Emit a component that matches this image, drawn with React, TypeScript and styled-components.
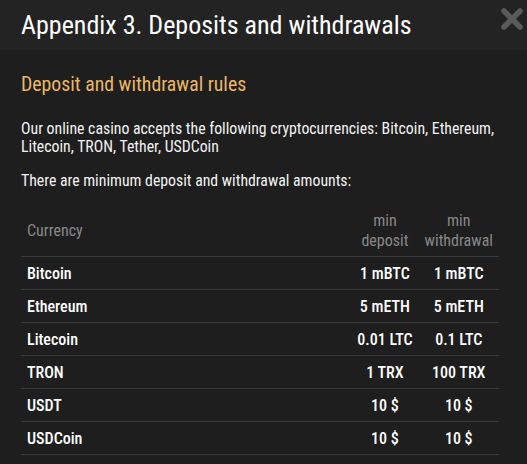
import React from "react";
import styled, { createGlobalStyle } from "styled-components";

const Global = createGlobalStyle`
  html, body { margin: 0; padding: 0; background: #1e1e1e; }
  body { font-family: Roboto, "Liberation Sans", sans-serif; font-stretch: condensed; }
`;

const Modal = styled.div`
  width: 527px;
  height: 464px;
  background: #1e1e1e;
  color: #fff;
  overflow: hidden;
`;

const Header = styled.header`
  height: 50px;
  background: #232323;
  display: flex;
  align-items: center;
  justify-content: space-between;
  padding: 0 0 0 21px;
`;

const Title = styled.h1`
  margin: 0;
  font-size: 26px;
  font-weight: 400;
  color: #fff;
  line-height: 30px;
`;

const Close = styled.button`
  background: none;
  border: 0;
  padding: 0;
  width: 30px;
  height: 30px;
  align-self: flex-start;
  margin-top: 5px;
  cursor: pointer;
`;

const Body = styled.div`
  padding: 22px 28px 0 21px;
`;

const Subtitle = styled.h2`
  margin: 0;
  font-size: 19.8px;
  font-weight: 400;
  color: #e9b766;
  line-height: 26px;
`;

const Para = styled.p<{ $top: number }>`
  margin: ${(p) => p.$top}px -6px 0 0;
  font-size: 15.8px;
  line-height: 18px;
  color: #f2f2f2;
`;

const Table = styled.table`
  margin-top: 19px;
  width: 478px;
  border-collapse: collapse;
`;

const Th = styled.th<{ $align?: string; $fit?: boolean }>`
  font-weight: 400;
  color: #888;
  font-size: 16px;
  line-height: 20px;
  text-align: ${(p) => p.$align || "center"};
  padding: 2px 6px 5px;
  width: ${(p) => (p.$fit ? "1%" : "auto")};
  white-space: nowrap;
  border-bottom: 1px solid #3a3a3a;
`;

const Td = styled.td<{ $align?: string }>`
  font-weight: 460;
  font-size: 16px;
  color: #fff;
  height: 32px;
  padding: 0 6px;
  text-align: ${(p) => p.$align || "center"};
  border-bottom: 1px solid #3a3a3a;
  white-space: nowrap;
`;

const rows = [
  ["Bitcoin", "1 mBTC", "1 mBTC"],
  ["Ethereum", "5 mETH", "5 mETH"],
  ["Litecoin", "0.01 LTC", "0.1 LTC"],
  ["TRON", "1 TRX", "100 TRX"],
  ["USDT", "10 $", "10 $"],
  ["USDCoin", "10 $", "10 $"],
];

export default function App() {
  return (
    <Modal>
      <Global />
      <Header>
        <Title>Appendix 3. Deposits and withdrawals</Title>
        <Close aria-label="close">
          <svg width="26" height="26" viewBox="0 0 26 26">
            <path d="M5 5 L21 21 M21 5 L5 21" stroke="#5a5a5a" strokeWidth="5.5" strokeLinecap="round" />
          </svg>
        </Close>
      </Header>
      <Body>
        <Subtitle>Deposit and withdrawal rules</Subtitle>
        <Para $top={22}>
          Our online casino accepts the following cryptocurrencies: Bitcoin, Ethereum, Litecoin, TRON, Tether, USDCoin
        </Para>
        <Para $top={16}>There are minimum deposit and withdrawal amounts:</Para>
        <Table>
          <thead>
            <tr>
              <Th $align="left">Currency</Th>
              <Th $fit>min<br />deposit</Th>
              <Th $fit>min<br />withdrawal</Th>
            </tr>
          </thead>
          <tbody>
            {rows.map((r) => (
              <tr key={r[0]}>
                <Td $align="left">{r[0]}</Td>
                <Td>{r[1]}</Td>
                <Td>{r[2]}</Td>
              </tr>
            ))}
          </tbody>
        </Table>
      </Body>
    </Modal>
  );
}
